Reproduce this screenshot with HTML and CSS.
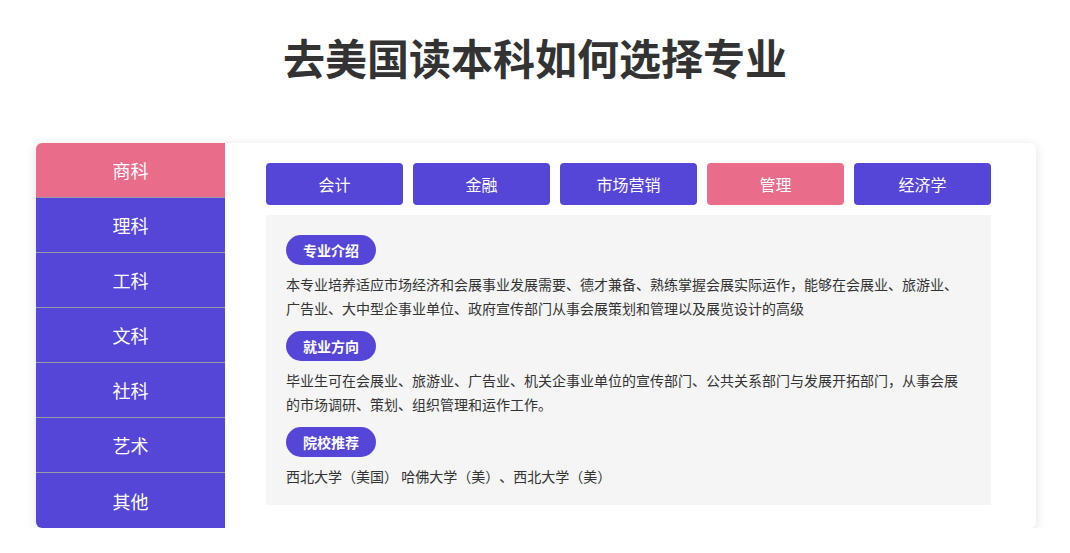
FILE: index.html
```html
<!DOCTYPE html>
<html lang="zh-CN">
  <head>
    <meta charset="utf-8">
    <meta name="viewport" content="width=device-width, initial-scale=1.0">
    <title>去美国读本科如何选择专业</title>
    <link rel="stylesheet" href="styles.css">
  </head>

  <body>
    <h1 class="title">去美国读本科如何选择专业</h1>
    <div class="card">
      <ul class="subjects">
        <li class="subject active">商科</li>
        <li class="subject">理科</li>
        <li class="subject">工科</li>
        <li class="subject">文科</li>
        <li class="subject">社科</li>
        <li class="subject">艺术</li>
        <li class="subject">其他</li>
      </ul>
      <div class="panel">
        <ul class="majors">
          <li class="major">会计</li>
          <li class="major">金融</li>
          <li class="major">市场营销</li>
          <li class="major active">管理</li>
          <li class="major">经济学</li>
        </ul>
        <div class="detail">
          <span class="badge">专业介绍</span>
          <p>本专业培养适应市场经济和会展事业发展需要、德才兼备、熟练掌握会展实际运作，能够在会展业、旅游业、广告业、大中型企事业单位、政府宣传部门从事会展策划和管理以及展览设计的高级</p>
          <span class="badge">就业方向</span>
          <p>毕业生可在会展业、旅游业、广告业、机关企事业单位的宣传部门、公共关系部门与发展开拓部门，从事会展的市场调研、策划、组织管理和运作工作。</p>
          <span class="badge">院校推荐</span>
          <p>西北大学（美国） 哈佛大学（美）、西北大学（美）</p>
        </div>
      </div>
    </div>
  </body>
</html>
```

FILE: styles.css
```css
* {
margin: 0;
padding: 0;
box-sizing: border-box;
font-family: "Noto Sans CJK SC", "Noto Sans", sans-serif;
}

body {
background: #fff;
color: #333;
}

.title {
margin: 27px 0 56px;
font-size: 42px;
line-height: 60px;
font-weight: 700;
text-align: center;
color: #333;
}

.card {
display: flex;
width: 1000px;
margin: 0 0 0 36px;
border-radius: 6px;
background: #fff;
box-shadow: 0 2px 12px rgba(0,0,0,0.12);
overflow: hidden;
}

.subjects {
width: 189px;
list-style: none;
flex-shrink: 0;
}

.subject {
height: 55px;
display: flex;
align-items: center;
justify-content: center;
color: #fff;
font-size: 18px;
background: #5546d8;
border-bottom: 1px solid #9a9aa6;
cursor: pointer;
}

.subject:last-child {
border-bottom: none;
}

.subject.active {
background: #e96d8b;
}

.panel {
flex: 1;
padding: 20px 45px 23px 41px;
}

.majors {
display: flex;
gap: 10px;
list-style: none;
margin-bottom: 10px;
}

.major {
flex: 1;
height: 42px;
display: flex;
align-items: center;
justify-content: center;
border-radius: 4px;
color: #fff;
font-size: 16px;
background: #5546d8;
cursor: pointer;
}

.major.active {
background: #e96d8b;
}

.detail {
height: 290px;
padding: 20px 30px 20px 20px;
background: #f5f5f5;
}

.badge {
display: inline-flex;
align-items: center;
justify-content: center;
width: 90px;
height: 30px;
margin-bottom: 7px;
border-radius: 15px;
color: #fff;
font-size: 14px;
font-weight: 700;
background: #5546d8;
}

.detail p {
margin-bottom: 11px;
font-size: 14px;
line-height: 24px;
color: #333;
text-spacing-trim: space-all;
}
```
